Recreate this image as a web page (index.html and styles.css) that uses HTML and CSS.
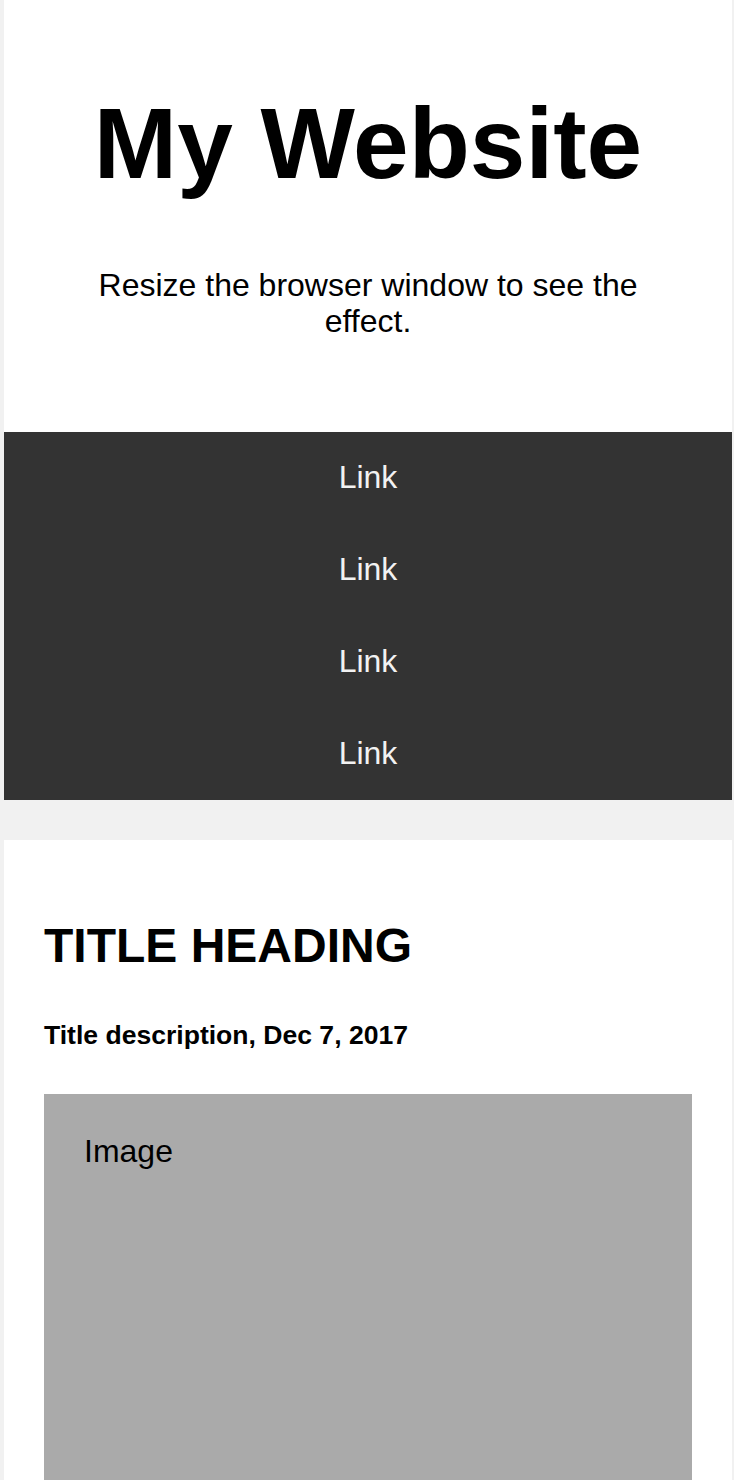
FILE: index.html
```html
<!DOCTYPE html>
<html lang="en">
<head>
<meta charset="utf-8">
<title>My Website</title>
<link rel="stylesheet" href="styles.css">
</head>
<body>
  <div class="page">
    <header class="header">
      <h1 class="site-title">My Website</h1>
      <p class="site-tagline">Resize the browser window to see the effect.</p>
    </header>
    <nav class="topnav">
      <a href="#">Link</a>
      <a href="#">Link</a>
      <a href="#">Link</a>
      <a href="#">Link</a>
    </nav>
    <main class="row">
      <article class="card">
        <h2 class="card-title">TITLE HEADING</h2>
        <h5 class="card-sub">Title description, Dec 7, 2017</h5>
        <div class="fakeimg">Image</div>
      </article>
    </main>
  </div>
</body>
</html>
```
FILE: styles.css
```css
html, body {
  margin: 0;
  padding: 0;
}
body {
  background: #f1f1f1;
  font-family: "Liberation Sans", Arial, Helvetica, sans-serif;
  font-size: 32px;
  color: #000;
}
.page {
  padding: 0 2px 0 4px;
}
.header {
  background: #fff;
  text-align: center;
  padding: 19px 60px 60px;
}
.site-title {
  font-size: 100px;
  font-weight: bold;
  margin: 67px 0 66px;
  line-height: 115px;
}
.site-tagline {
  font-size: 32px;
  line-height: 36px;
  margin: 0 0 33px;
}
.topnav {
  background: #333;
  display: flex;
  flex-direction: column;
}
.topnav a {
  color: #f2f2f2;
  text-decoration: none;
  text-align: center;
  font-size: 32px;
  line-height: 36px;
  padding: 27px 32px 29px;
}
.row {
  padding-top: 40px;
}
.card {
  background: #fff;
  padding: 40px;
}
.card-title {
  font-size: 48px;
  margin: 38px 0 40px;
}
.card-sub {
  font-size: 26.56px;
  margin: 47.4px 0 42.4px;
}
.fakeimg {
  background: #aaa;
  height: 401px;
  padding: 39px 40px 40px;
  font-size: 32px;
  line-height: 36px;
}
```
